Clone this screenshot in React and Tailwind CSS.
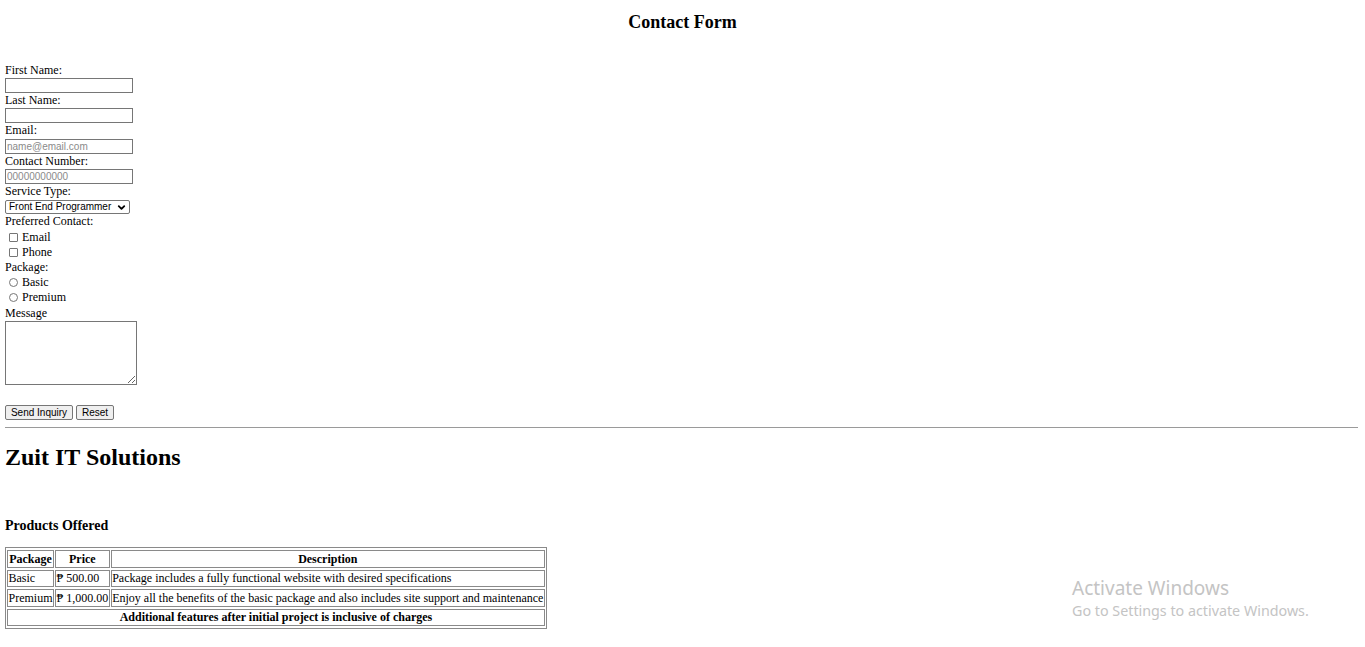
import React from "react";
import { ChevronDown } from "lucide-react";

const serif = { fontFamily: '"Liberation Serif", "Times New Roman", serif' };

function Label({ children, className = "" }) {
  return <div className={`h-[15px] leading-[15px] text-[12px] text-black ${className}`}>{children}</div>;
}

function TextInput({ placeholder, className = "" }) {
  return (
    <div className={`h-[15px] ${className}`}>
      <input
        type="text"
        placeholder={placeholder}
        className="block w-[128px] h-[15px] border border-[#767676] bg-white px-[1px] text-[10px] leading-[13px] font-['Liberation_Sans',Arial,sans-serif] placeholder:text-[#8a8a8a] outline-none"
      />
    </div>
  );
}

function Check({ type, label }) {
  return (
    <div className="h-[15px] flex items-center text-[12px] leading-[15px]">
      <input
        type={type}
        className={`ml-[4px] mr-[4px] w-[9px] h-[9px] appearance-none border border-[#767676] bg-white ${
          type === "radio" ? "rounded-full" : "rounded-[1px]"
        }`}
      />
      <span>{label}</span>
    </div>
  );
}

export default function App() {
  const cell = "border border-[#8a8a8a] px-[0.5px] py-0 h-[17.5px] leading-[14px] text-[12px]";
  return (
    <div className="relative min-h-[647px] bg-white px-[5px] pt-[12px] text-black" style={serif}>
      <h2 className="h-[21px] leading-[21px] text-[18px] font-bold text-center">Contact Form</h2>

      <form className="mt-[30px] flex flex-col">
        <Label>First Name:</Label>
        <TextInput />
        <Label>Last Name:</Label>
        <TextInput />
        <Label>Email:</Label>
        <TextInput placeholder="name@email.com" className="mt-[1px]" />
        <Label>Contact Number:</Label>
        <TextInput placeholder="00000000000" />
        <Label>Service Type:</Label>
        <div className="mt-[1px] h-[14px] w-[125px] border border-[#767676] rounded-[2px] bg-white flex items-center justify-between pl-[3px] pr-[2px] text-[10px] font-['Liberation_Sans',Arial,sans-serif]">
          <span className="leading-[12px]">Front End Programmer</span>
          <ChevronDown size={11} strokeWidth={4} className="text-black" />
        </div>
        <Label>Preferred Contact:</Label>
        <div className="mt-[1px]">
          <Check type="checkbox" label="Email" />
          <Check type="checkbox" label="Phone" />
        </div>
        <Label>Package:</Label>
        <div>
          <Check type="radio" label="Basic" />
          <Check type="radio" label="Premium" />
        </div>
        <Label className="mt-[1px]">Message</Label>
        <textarea className="block w-[132px] h-[64px] border border-[#767676] bg-white outline-none" />
        <div className="mt-[20px] flex gap-[3px] text-[10px] font-['Liberation_Sans',Arial,sans-serif]">
          <button type="button" className="h-[15px] w-[68px] border border-[#767676] rounded-[2px] bg-[#efefef] leading-[13px]">
            Send Inquiry
          </button>
          <button type="button" className="h-[15px] w-[38px] border border-[#767676] rounded-[2px] bg-[#efefef] leading-[13px]">
            Reset
          </button>
        </div>
      </form>

      <div className="mt-[7px] mr-[2px] h-px bg-[#9a9a9a]" />

      <h1 className="mt-[15px] h-[28px] leading-[28px] text-[24px] font-bold">Zuit IT Solutions</h1>

      <h4 className="mt-[46px] h-[17px] leading-[17px] text-[14px] font-bold">Products Offered</h4>

      <table className="mt-[13px] border border-[#8a8a8a] border-separate border-spacing-x-[1.5px] border-spacing-y-[2px]">
        <thead>
          <tr>
            <th className={`${cell} font-bold`}>Package</th>
            <th className={`${cell} font-bold`}>Price</th>
            <th className={`${cell} font-bold`}>Description</th>
          </tr>
        </thead>
        <tbody>
          <tr>
            <td className={cell}>Basic</td>
            <td className={cell}>₱ 500.00</td>
            <td className={cell}>Package includes a fully functional website with desired specifications</td>
          </tr>
          <tr>
            <td className={cell}>Premium</td>
            <td className={cell}>₱ 1,000.00</td>
            <td className={cell}>Enjoy all the benefits of the basic package and also includes site support and maintenance</td>
          </tr>
          <tr>
            <td colSpan={3} className={`${cell} font-bold text-center`}>
              Additional features after initial project is inclusive of charges
            </td>
          </tr>
        </tbody>
      </table>

      <div className="absolute left-[1072px] top-[575px] text-[#c4c4c4] font-['Noto_Sans',sans-serif] pointer-events-none">
        <div className="text-[19px] leading-[26px]">Activate Windows</div>
        <div className="text-[14.3px] leading-[20px]">Go to Settings to activate Windows.</div>
      </div>
    </div>
  );
}
